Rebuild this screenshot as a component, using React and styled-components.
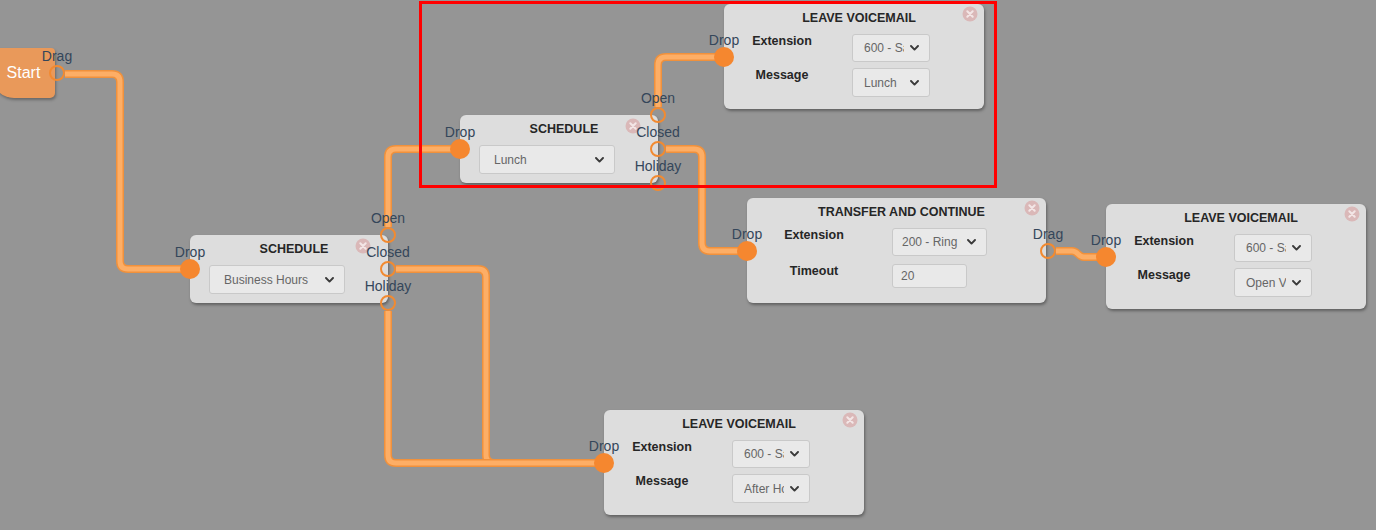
import React from "react";
import styled, { createGlobalStyle, css } from "styled-components";

const GlobalStyle = createGlobalStyle`
  html, body {
    margin: 0;
    padding: 0;
    background: #959595;
    font-family: "Liberation Sans", Arial, sans-serif;
  }
`;

const Canvas = styled.div`
  position: relative;
  width: 1376px;
  height: 530px;
  overflow: hidden;
  background: #959595;
`;

const WireLayer = styled.svg`
  position: absolute;
  left: 0;
  top: 0;
  width: 1376px;
  height: 530px;
  pointer-events: none;
`;

const Card = styled.div`
  position: absolute;
  left: ${(p) => p.$x}px;
  top: ${(p) => p.$y}px;
  width: ${(p) => p.$w}px;
  height: ${(p) => p.$h}px;
  box-sizing: border-box;
  background: #dddddd;
  border-radius: 6px;
  box-shadow: 1px 2px 3px rgba(0, 0, 0, 0.35);
  display: flex;
  flex-direction: column;
`;

const Title = styled.div`
  margin-top: 6px;
  padding-left: 10px;
  height: 16px;
  line-height: 16px;
  text-align: center;
  font-size: 12.5px;
  font-weight: 700;
  color: #262626;
  white-space: nowrap;
`;

const CloseBtn = styled.svg`
  position: absolute;
  top: ${(p) => p.$top}px;
  right: ${(p) => p.$right}px;
  width: 16px;
  height: 16px;
`;

const ScheduleBody = styled.div`
  margin-top: 8px;
  padding-left: 19px;
  display: flex;
`;

const FieldGrid = styled.div`
  margin-top: 8px;
  display: grid;
  grid-template-columns: ${(p) => p.$labelW}px auto;
  column-gap: ${(p) => p.$gap}px;
  row-gap: ${(p) => p.$rowGap}px;
  align-items: start;
`;

const FieldLabel = styled.div`
  text-align: center;
  font-size: 12.5px;
  font-weight: 700;
  line-height: 14px;
  color: #262626;
  white-space: nowrap;
`;

const SelectBox = styled.div`
  box-sizing: border-box;
  width: ${(p) => p.$w}px;
  height: ${(p) => p.$h || 28}px;
  padding-left: ${(p) => p.$pad}px;
  background: #e9e9e9;
  border: 1px solid #c9c9c9;
  border-radius: 3px;
  display: flex;
  align-items: center;
  gap: 6px;
  font-size: 12px;
  color: #666;
`;

const SelectText = styled.span`
  flex: 1;
  min-width: 0;
  overflow: hidden;
  white-space: nowrap;
`;

const Chevron = styled.svg`
  width: 9px;
  height: 6px;
  margin-right: 10px;
  flex: none;
`;

const TextInput = styled.div`
  box-sizing: border-box;
  width: ${(p) => p.$w}px;
  height: 24px;
  padding-left: 8px;
  background: #e9e9e9;
  border: 1px solid #c9c9c9;
  border-radius: 3px;
  display: flex;
  align-items: center;
  font-size: 12px;
  color: #666;
`;

/* A rail of ports along one edge of a node: ports are laid out by flex */
const PortRail = styled.div`
  position: absolute;
  top: 0;
  bottom: 0;
  ${(p) => (p.$side === "left" ? "left: 0;" : `right: ${-(p.$dx || 0)}px;`)}
  width: 0;
  display: flex;
  flex-direction: column;
  align-items: center;
  justify-content: ${(p) => p.$justify || "center"};
  z-index: 2;
`;

const PortAnchor = styled.div`
  position: relative;
  width: 0;
  height: 0;
`;

const Dot = styled.div`
  position: absolute;
  box-sizing: border-box;
  border-radius: 50%;
  ${(p) =>
    p.$filled
      ? css`
          width: 20px;
          height: 20px;
          left: -10px;
          top: -10px;
          background: #f5872f;
        `
      : css`
          width: 16px;
          height: 16px;
          left: -8px;
          top: -8px;
          border: 2px solid #f28a30;
        `}
`;

const PortLabel = styled.div`
  position: absolute;
  left: 0;
  bottom: 9px;
  transform: translateX(-50%);
  font-size: 14px;
  line-height: 16px;
  color: #34465a;
  white-space: nowrap;
`;

const StartShape = styled.div`
  position: absolute;
  left: -8px;
  top: 48px;
  width: 63px;
  height: 50px;
  background: #e9995a;
  border-radius: 6px 4px 5px 22px;
  box-shadow: 1px 2px 3px rgba(0, 0, 0, 0.3);
  display: flex;
  align-items: center;
  justify-content: center;
  color: #fff;
  font-size: 16px;
`;

const Highlight = styled.div`
  position: absolute;
  left: 419px;
  top: 1px;
  width: 578px;
  height: 187px;
  box-sizing: border-box;
  border: 3px solid #ff0000;
  z-index: 5;
`;

function Port({ filled, label }) {
  return (
    <PortAnchor>
      <Dot $filled={filled} />
      <PortLabel>{label}</PortLabel>
    </PortAnchor>
  );
}

function Close({ top = 2, right = 6 }) {
  return (
    <CloseBtn viewBox="0 0 16 16" $top={top} $right={right}>
      <circle cx="8" cy="8" r="7.5" fill="#dab8b8" />
      <path d="M5.3 5.3 L10.7 10.7 M10.7 5.3 L5.3 10.7" stroke="#f3e6e6" strokeWidth="2" strokeLinecap="round" />
    </CloseBtn>
  );
}

function Select({ w, pad, value, h }) {
  return (
    <SelectBox $w={w} $pad={pad} $h={h}>
      <SelectText>{value}</SelectText>
      <Chevron viewBox="0 0 9 6">
        <path d="M1 1 L4.5 4.6 L8 1" fill="none" stroke="#3a3a3a" strokeWidth="1.9" strokeLinecap="round" strokeLinejoin="round" />
      </Chevron>
    </SelectBox>
  );
}

function ScheduleNode({ x, y, value }) {
  return (
    <Card $x={x} $y={y} $w={198} $h={68}>
      <PortRail $side="left">
        <Port filled label="Drop" />
      </PortRail>
      <Title>SCHEDULE</Title>
      <Close top={3} right={17} />
      <ScheduleBody>
        <Select w={136} pad={14} value={value} h={29} />
      </ScheduleBody>
      <PortRail $side="right" $justify="space-between">
        <Port label="Open" />
        <Port label="Closed" />
        <Port label="Holiday" />
      </PortRail>
    </Card>
  );
}

function VoicemailNode({ x, y, message }) {
  return (
    <Card $x={x} $y={y} $w={260} $h={105}>
      <PortRail $side="left">
        <Port filled label="Drop" />
      </PortRail>
      <Title>LEAVE VOICEMAIL</Title>
      <Close />
      <FieldGrid $labelW={116} $gap={12} $rowGap={6}>
        <FieldLabel>Extension</FieldLabel>
        <Select w={78} pad={11} value="600 - Sales" />
        <FieldLabel>Message</FieldLabel>
        <Select w={78} pad={11} value={message} h={29} />
      </FieldGrid>
    </Card>
  );
}

function TransferNode({ x, y }) {
  return (
    <Card $x={x} $y={y} $w={299} $h={105}>
      <PortRail $side="left">
        <Port filled label="Drop" />
      </PortRail>
      <Title>TRANSFER AND CONTINUE</Title>
      <Close />
      <FieldGrid $labelW={134} $gap={11} $rowGap={8}>
        <FieldLabel>Extension</FieldLabel>
        <Select w={95} pad={9} value="200 - Ring Group" />
        <FieldLabel>Timeout</FieldLabel>
        <TextInput $w={75}>20</TextInput>
      </FieldGrid>
      <PortRail $side="right" $dx={2}>
        <Port label="Drag" />
      </PortRail>
    </Card>
  );
}

const wires = [
  "M65,74 H112 Q120,74 120,82 V261 Q120,269 128,269 H190",
  "M388,227 V157 Q388,149 396,149 H460",
  "M396,269 H478 Q486,269 486,277 V455 Q486,463 494,463 H604",
  "M388,311 V455 Q388,463 396,463 H604",
  "M658,107 V65 Q658,57 666,57 H724",
  "M666,149 H694 Q702,149 702,157 V243 Q702,251 710,251 H747",
  "M1056,251 H1072 C1078,251 1078,257 1084,257 H1106",
];

export default function App() {
  return (
    <>
      <GlobalStyle />
      <Canvas>
        <WireLayer viewBox="0 0 1376 530">
          {wires.map((d, i) => (
            <g key={i} fill="none" strokeLinejoin="round">
              <path d={d} stroke="#f0913c" strokeWidth="8" />
              <path d={d} stroke="#fdae66" strokeWidth="5" />
            </g>
          ))}
        </WireLayer>

        <StartShape>
          Start
          <PortRail $side="right" $dx={2}>
            <Port label="Drag" />
          </PortRail>
        </StartShape>

        <ScheduleNode x={190} y={235} value="Business Hours" />
        <ScheduleNode x={460} y={115} value="Lunch" />
        <VoicemailNode x={724} y={4} message="Lunch" />
        <TransferNode x={747} y={198} />
        <VoicemailNode x={1106} y={204} message="Open Voicemail" />
        <VoicemailNode x={604} y={410} message="After Hours" />

        <Highlight />
      </Canvas>
    </>
  );
}
